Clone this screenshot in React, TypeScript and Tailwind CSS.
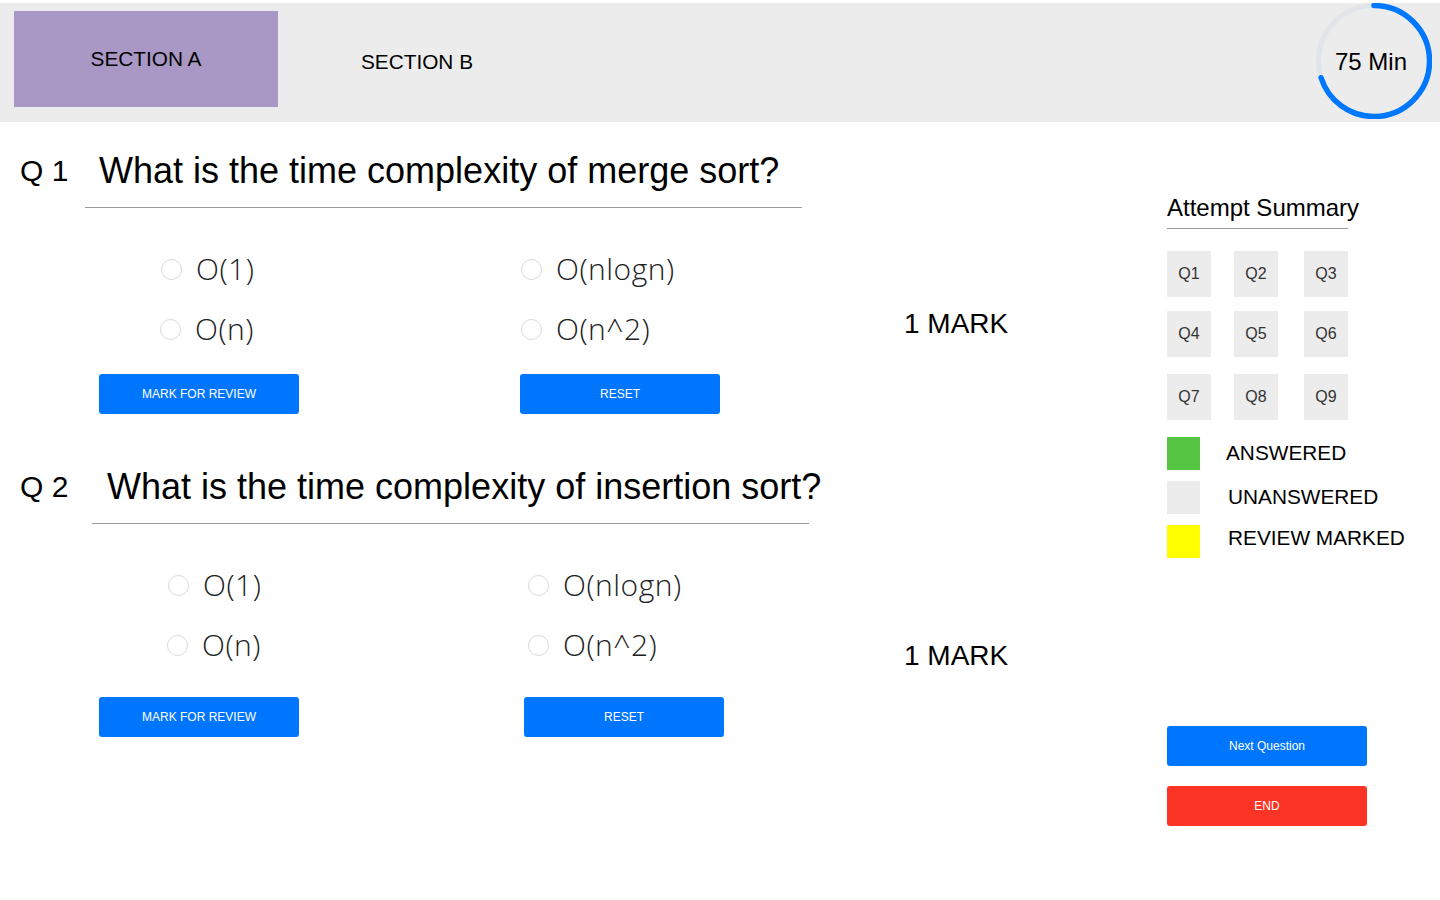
import React from "react";

const sans = { fontFamily: '"Liberation Sans", Arial, sans-serif' };

function Radio() {
  return <span className="inline-block w-[21px] h-[21px] rounded-full border border-[#d9d9d9] bg-white shrink-0" />;
}

function Option({ label, pl }: { label: string; pl: number }) {
  return (
    <div className="flex items-center h-[40px]" style={{ paddingLeft: pl }}>
      <Radio />
      <span
        className="ml-[14px] text-[30px] font-light text-[#222] leading-none"
        style={{ fontFamily: '"Open Sans", sans-serif', letterSpacing: "0.5px" }}
      >
        {label}
      </span>
    </div>
  );
}

function Question(props: {
  num: string;
  text: string;
  textX: number;
  lineX: number;
  c1: [number, number];
  c2: [number, number];
  btnMt: number;
  resetX: number;
  markMt: number;
  mt: number;
}) {
  const { num, text, textX, lineX, c1, c2, btnMt, resetX, markMt, mt } = props;
  return (
    <div className="flex flex-col" style={{ marginTop: mt }}>
      <div className="flex items-center h-[42px]">
        <span className="pl-[20px] text-[30px] text-black leading-none" style={{ width: textX }}>
          {num}
        </span>
        <span className="text-[36px] text-black leading-none">{text}</span>
      </div>
      <div className="h-px bg-[#9a9a9a] mt-[15px] w-[717px]" style={{ marginLeft: lineX }} />
      <div className="flex items-start">
        <div className="flex flex-col w-[880px]">
          <div className="flex mt-[41px]">
            <div className="w-[360px] flex flex-col gap-[20px]">
              <Option label="O(1)" pl={c1[0]} />
              <Option label="O(n)" pl={c1[1]} />
            </div>
            <div className="flex flex-col gap-[20px]">
              <Option label="O(nlogn)" pl={c2[0]} />
              <Option label="O(n^2)" pl={c2[1]} />
            </div>
          </div>
          <div className="flex" style={{ marginTop: btnMt }}>
            <button className="ml-[99px] w-[200px] h-[40px] bg-[#0076ff] rounded-[3px] text-white text-[12px]">
              MARK FOR REVIEW
            </button>
            <button
              className="w-[200px] h-[40px] bg-[#0076ff] rounded-[3px] text-white text-[12px]"
              style={{ marginLeft: resetX - 299 }}
            >
              RESET
            </button>
          </div>
        </div>
        <div className="ml-[24px] text-[28px] text-black leading-none" style={{ marginTop: markMt }}>
          1 MARK
        </div>
      </div>
    </div>
  );
}

function Timer() {
  const r = 55.5;
  const c = 2 * Math.PI * r;
  return (
    <div className="relative w-[116px] h-[116px] mr-[8px]">
      <svg width="116" height="116" viewBox="0 0 116 116" className="absolute inset-0">
        <circle cx="58" cy="58" r={r} fill="none" stroke="#e1e4e8" strokeWidth="5" />
        <circle
          cx="58"
          cy="58"
          r={r}
          fill="none"
          stroke="#0077ff"
          strokeWidth="5.5"
          strokeLinecap="round"
          strokeDasharray={`${c * 0.7} ${c}`}
          transform="rotate(-90 58 58)"
        />
      </svg>
      <div className="absolute inset-0 flex items-center justify-center text-[24px] text-black pr-[6px] pt-[2px]">75 Min</div>
    </div>
  );
}

export default function App() {
  const qBoxes = [
    ["Q1", "Q2", "Q3"],
    ["Q4", "Q5", "Q6"],
    ["Q7", "Q8", "Q9"],
  ];
  const rowMt = [22, 14, 17];
  return (
    <div className="w-[1440px] h-[900px] bg-white overflow-hidden" style={sans}>
      <div className="mt-[3px] h-[119px] bg-[#ececec] flex items-start">
        <div className="mt-[8px] ml-[14px] w-[264px] h-[96px] bg-[#a998c5] flex items-center justify-center text-[20.8px] text-black">
          SECTION A
        </div>
        <div className="mt-[8px] ml-[7px] w-[264px] h-[102px] flex items-center justify-center text-[20.8px] text-black">
          SECTION B
        </div>
        <div className="ml-auto">
          <Timer />
        </div>
      </div>
      <div className="flex">
        <div className="w-[1167px] flex flex-col">
          <Question
            num="Q 1"
            text="What is the time complexity of merge sort?"
            textX={99}
            lineX={85}
            c1={[161, 160]}
            c2={[161, 161]}
            btnMt={25}
            resetX={520}
            markMt={102}
            mt={28}
          />
          <Question
            num="Q 2"
            text="What is the time complexity of insertion sort?"
            textX={107}
            lineX={92}
            c1={[168, 167]}
            c2={[168, 168]}
            btnMt={32}
            resetX={524}
            markMt={118}
            mt={52}
          />
        </div>
        <div className="flex flex-col">
          <div className="mt-[72px] text-[24px] leading-[28px] text-black">Attempt Summary</div>
          <div className="mt-[6px] h-px w-[181px] bg-[#9a9a9a]" />
          {qBoxes.map((row, i) => (
            <div key={i} className="flex" style={{ marginTop: rowMt[i] }}>
              {row.map((q, j) => (
                <div
                  key={q}
                  className="w-[44px] h-[46px] bg-[#ececec] flex items-center justify-center text-[16px] text-[#333]"
                  style={{ marginLeft: j === 0 ? 0 : j === 1 ? 23 : 26 }}
                >
                  {q}
                </div>
              ))}
            </div>
          ))}
          <div className="mt-[17px] flex items-center">
            <div className="w-[33px] h-[33px] bg-[#55c443]" />
            <span className="ml-[26px] text-[20.8px] text-black -mt-[2px]">ANSWERED</span>
          </div>
          <div className="mt-[11px] flex items-center">
            <div className="w-[33px] h-[33px] bg-[#ececec]" />
            <span className="ml-[28px] text-[20.8px] text-black -mt-[2px]">UNANSWERED</span>
          </div>
          <div className="mt-[11px] flex items-center">
            <div className="w-[33px] h-[33px] bg-[#ffff00]" />
            <span className="ml-[28px] text-[20.8px] text-black -mt-[8px]">REVIEW MARKED</span>
          </div>
          <button className="mt-[168px] w-[200px] h-[40px] bg-[#0076ff] rounded-[3px] text-white text-[12px]">
            Next Question
          </button>
          <button className="mt-[20px] w-[200px] h-[40px] bg-[#fb3426] rounded-[3px] text-white text-[12px]">
            END
          </button>
        </div>
      </div>
    </div>
  );
}
